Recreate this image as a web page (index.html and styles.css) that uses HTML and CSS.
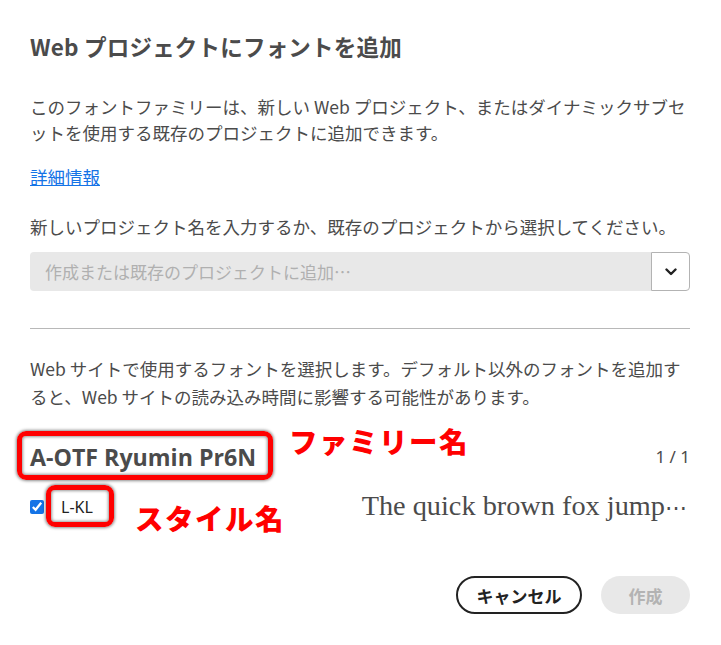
FILE: index.html
```html
<!DOCTYPE html>
<html lang="ja">
<head>
<meta charset="utf-8">
<title>Web プロジェクトにフォントを追加</title>
<link rel="stylesheet" href="styles.css">
</head>
<body>
<div class="dialog">
  <h1 class="title">Web プロジェクトにフォントを追加</h1>
  <p class="intro">このフォントファミリーは、新しい Web プロジェクト、またはダイナミックサブセ<br>ットを使用する既存のプロジェクトに追加できます。</p>
  <a class="link" href="#">詳細情報</a>
  <p class="label">新しいプロジェクト名を入力するか、既存のプロジェクトから選択してください。</p>
  <div class="combo">
    <div class="combo-input">作成または既存のプロジェクトに追加…</div>
    <div class="combo-btn">
      <svg width="12" height="8" viewBox="0 0 12 8"><polyline points="1.5,1.5 6,6 10.5,1.5" fill="none" stroke="#222" stroke-width="2.4" stroke-linecap="round" stroke-linejoin="round"/></svg>
    </div>
  </div>
  <hr class="divider">
  <p class="note">Web サイトで使用するフォントを選択します。デフォルト以外のフォントを追加す<br>ると、Web サイトの読み込み時間に影響する可能性があります。</p>
  <div class="family-row">
    <div class="family">
      <span class="family-name">A-OTF Ryumin Pr6N</span>
      <span class="mark mark-family"></span>
      <span class="callout callout-family">ファミリー名</span>
    </div>
    <span class="count">1 / 1</span>
  </div>
  <div class="style-row">
    <input type="checkbox" class="check" checked>
    <div class="style">
      <span class="style-name">L-KL</span>
      <span class="mark mark-style"></span>
      <span class="callout callout-style">スタイル名</span>
    </div>
    <div class="sample">The quick brown fox jump<span class="dots">⋯</span></div>
  </div>
  <div class="actions">
    <button class="btn btn-cancel">キャンセル</button>
    <button class="btn btn-create" disabled>作成</button>
  </div>
</div>
</body>
</html>
```
FILE: styles.css
```css
html, body {
  margin: 0;
  padding: 0;
  background: #fff;
}
body {
  font-family: "Noto Sans CJK JP", "Noto Sans", sans-serif;
  color: #4b4b4b;
}
.dialog {
  width: 660px;
  padding: 31px 31px 0 30px;
}
.title {
  margin: 0;
  font-size: 22.5px;
  line-height: 30px;
  font-weight: 700;
  letter-spacing: 0.2px;
  color: #4b4b4b;
}
.intro {
  margin: 33px 0 0;
  font-size: 17.5px;
  line-height: 26px;
}
.link {
  display: block;
  width: max-content;
  margin-top: 18px;
  font-size: 17.5px;
  line-height: 26px;
  color: #1473e6;
  text-decoration: underline;
}
.label {
  margin: 24px 0 0;
  font-size: 17.5px;
  line-height: 26px;
}
.combo {
  display: flex;
  margin-top: 12px;
  height: 39px;
}
.combo-input {
  flex: 1;
  background: #e8e8e8;
  border-radius: 4px 0 0 4px;
  padding-left: 15px;
  font-size: 17px;
  line-height: 39px;
  color: #b0b0b0;
}
.combo-btn {
  width: 39px;
  box-sizing: border-box;
  border: 1px solid #b3b3b3;
  border-radius: 0 4px 4px 0;
  background: #fff;
  display: flex;
  align-items: center;
  justify-content: center;
}
.divider {
  margin: 37px 0 0;
  border: 0;
  border-top: 1px solid #b8b8b8;
  height: 0;
}
.note {
  margin: 26px 0 0;
  font-size: 17.5px;
  line-height: 28px;
}
.family-row {
  display: flex;
  align-items: center;
  justify-content: space-between;
  margin-top: 31px;
  height: 30px;
}
.family {
  position: relative;
}
.family-name {
  font-family: "Open Sans", "Noto Sans", sans-serif;
  font-weight: 700;
  font-size: 23.2px;
  line-height: 30px;
  color: #4b4b4b;
  display: block;
}
.count {
  font-size: 17px;
  line-height: 30px;
  font-family: "Noto Sans", sans-serif;
}
.mark {
  position: absolute;
  box-sizing: border-box;
  border: 5px solid #f00;
  border-radius: 9px;
  box-shadow: 0 0 3px 1px rgba(0, 0, 0, 0.45), inset 0 0 3px 1px rgba(0, 0, 0, 0.4);
}
.mark-family {
  left: -13px;
  top: -11px;
  width: 256px;
  height: 49px;
}
.callout {
  position: absolute;
  white-space: nowrap;
  color: #f00;
  font-weight: 900;
  font-size: 28.5px;
  line-height: 29px;
  letter-spacing: 1.5px;
}
.callout-family {
  left: 259px;
  top: -16px;
}
.style-row {
  display: flex;
  align-items: center;
  margin-top: 20px;
  height: 30px;
}
.check {
  margin: 0 17px 0 0;
  width: 14px;
  height: 14px;
  accent-color: #1473e6;
}
.style {
  position: relative;
}
.style-name {
  display: block;
  font-family: "Noto Sans", sans-serif;
  font-size: 16px;
  line-height: 30px;
  color: #222;
}
.mark-style {
  left: -15px;
  top: -7px;
  width: 68px;
  height: 42px;
}
.callout-style {
  left: 74px;
  top: 11px;
  font-size: 28.5px;
}
.sample {
  margin-left: auto;
  padding-right: 3px;
  font-family: "Liberation Serif", serif;
  font-size: 28.3px;
  line-height: 30px;
  color: #4b4b4b;
  white-space: nowrap;
}
.dots {
  font-family: "DejaVu Serif", serif;
  font-size: 22px;
}
.actions {
  display: flex;
  justify-content: flex-end;
  gap: 19px;
  margin-top: 54px;
}
.btn {
  height: 38px;
  border-radius: 19px;
  font-family: "Noto Sans CJK JP", sans-serif;
  font-weight: 700;
  font-size: 17px;
  padding: 0;
  box-sizing: border-box;
}
.btn-cancel {
  width: 126px;
  border: 2px solid #222;
  background: #fff;
  color: #222;
}
.btn-create {
  width: 89px;
  border: 0;
  background: #e8e8e8;
  color: #b3b3b3;
}
```
